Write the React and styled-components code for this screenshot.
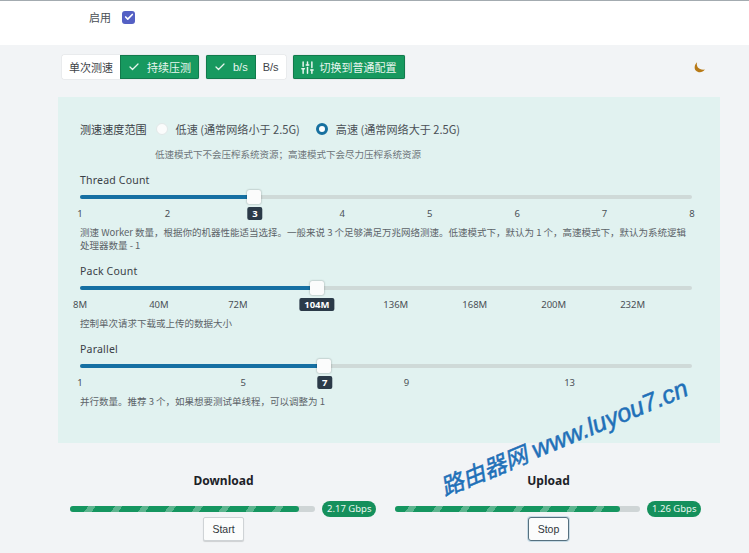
import React from "react";
import styled, { createGlobalStyle } from "styled-components";
import { Check, SlidersVertical } from "lucide-react";

const GlobalStyle = createGlobalStyle`
  html, body {
    margin: 0;
    padding: 0;
    background: #f2f4f6;
    overflow: hidden;
  }
  body {
    font-family: "Noto Sans CJK SC", "Noto Sans", sans-serif;
    color: #3a4046;
  }
`;

const sliders = [
  {
    label: "Thread Count",
    value: 28.5,
    marks: ["1", "2", "3", "4", "5", "6", "7", "8"].map((t, i) => ({
      text: t,
      left: (i / 7) * 100,
      active: t === "3",
    })),
    desc: "测速 Worker 数量，根据你的机器性能适当选择。一般来说 3 个足够满足万兆网络测速。低速模式下，默认为 1 个，高速模式下，默认为系统逻辑处理器数量 - 1",
  },
  {
    label: "Pack Count",
    value: 38.7,
    marks: ["8M", "40M", "72M", "104M", "136M", "168M", "200M", "232M"].map((t, i) => ({
      text: t,
      left: i * 12.9,
      active: t === "104M",
    })),
    desc: "控制单次请求下载或上传的数据大小",
  },
  {
    label: "Parallel",
    value: 39.9,
    marks: ["1", "5", "7", "9", "13"].map((t) => ({
      text: t,
      left: ((Number(t) - 1) / 15) * 100,
      active: t === "7",
    })),
    desc: "并行数量。推荐 3 个，如果想要测试单线程，可以调整为 1",
  },
];

const App = () => {
  return (
    <Page>
      <GlobalStyle />
      <Header>
        <HeaderLabel>启用</HeaderLabel>
        <CheckBox>
          <Check size={10} strokeWidth={4} color="#fff" />
        </CheckBox>
      </Header>

      <Toolbar>
        <ButtonGroup>
          <Segment>单次测速</Segment>
          <Segment $active>
            <Check size={12} strokeWidth={2.5} />
            持续压测
          </Segment>
        </ButtonGroup>
        <ButtonGroup>
          <Segment $active>
            <Check size={12} strokeWidth={2.5} />
            b/s
          </Segment>
          <Segment>B/s</Segment>
        </ButtonGroup>
        <ButtonGroup>
          <Segment $active $tight>
            <SlidersVertical size={15} strokeWidth={2.4} />
            切换到普通配置
          </Segment>
        </ButtonGroup>
        <MoonIcon viewBox="0 0 16 16">
          <path d="M5 1.5 C3.6 6.5 7 11.5 14.5 10.6 C12 14.6 6.4 15 3.4 11.8 C1.2 9.2 1.8 4.2 5 1.5 Z" fill="#b87a17" />
        </MoonIcon>
      </Toolbar>

      <Panel>
        <RadioRow>
          <RadioTitle>测速速度范围</RadioTitle>
          <RadioOption>
            <Radio />
            低速 (通常网络小于 2.5G)
          </RadioOption>
          <RadioOption>
            <Radio $checked />
            高速 (通常网络大于 2.5G)
          </RadioOption>
        </RadioRow>
        <RadioHint>低速模式下不会压榨系统资源；高速模式下会尽力压榨系统资源</RadioHint>

        {sliders.map((slider) => (
          <SliderBlock key={slider.label}>
            <SliderLabel>{slider.label}</SliderLabel>
            <Track>
              <Fill style={{ width: `${slider.value}%` }} />
              <Thumb style={{ left: `${slider.value}%` }} />
            </Track>
            <Marks>
              {slider.marks.map((mark) => (
                <Mark key={mark.text} $active={mark.active} style={{ left: `${mark.left}%` }}>
                  {mark.text}
                </Mark>
              ))}
            </Marks>
            <Description>{slider.desc}</Description>
          </SliderBlock>
        ))}
      </Panel>

      <Meters>
        <Meter>
          <MeterTitle>Download</MeterTitle>
          <BarRow>
            <Bar>
              <BarFill style={{ width: "93.5%" }} />
            </Bar>
            <Badge>2.17 Gbps</Badge>
          </BarRow>
          <ActionButton>Start</ActionButton>
        </Meter>
        <Meter>
          <MeterTitle>Upload</MeterTitle>
          <BarRow>
            <Bar>
              <BarFill style={{ width: "92%" }} />
            </Bar>
            <Badge>1.26 Gbps</Badge>
          </BarRow>
          <ActionButton $focused>Stop</ActionButton>
        </Meter>
      </Meters>

      <Watermark>
        路由器网 <WatermarkUrl>www.luyou7.cn</WatermarkUrl>
      </Watermark>
    </Page>
  );
};

export default App;

const Page = styled.div`
  position: relative;
  width: 749px;
  height: 553px;
  overflow: hidden;
  background: #f2f4f6;
`;

const Header = styled.div`
  display: flex;
  align-items: center;
  gap: 11px;
  height: 45px;
  box-sizing: border-box;
  padding: 0 0 12px 89px;
  background: #fff;
  border-top: 1px solid #a3abb0;
`;

const HeaderLabel = styled.span`
  font-size: 11px;
  color: #4a4f55;
`;

const CheckBox = styled.span`
  display: flex;
  align-items: center;
  justify-content: center;
  width: 13px;
  height: 13px;
  border-radius: 3px;
  background: #5460c4;
`;

const Toolbar = styled.div`
  display: flex;
  align-items: center;
  gap: 7px;
  height: 24px;
  margin-top: 10px;
  padding-left: 62px;
`;

const ButtonGroup = styled.div`
  display: flex;
  height: 24px;
  border-radius: 2px;
  overflow: hidden;
  box-shadow: 0 0 1px rgba(0, 0, 0, 0.35);
`;

const Segment = styled.div`
  display: flex;
  align-items: center;
  gap: ${(props) => (props.$tight ? "5px" : "7px")};
  padding: ${(props) => (props.$tight ? "0 7px 0 6px" : "0 7px")};
  font-family: "Liberation Sans", "Noto Sans CJK SC", sans-serif;
  font-size: 11px;
  white-space: nowrap;
  background: ${(props) => (props.$active ? "#17995f" : "#fff")};
  color: ${(props) => (props.$active ? "#e8f6ef" : "#3d4248")};
  border: ${(props) => (props.$active ? "1px solid #127a4c" : "none")};
  box-sizing: border-box;
`;

const MoonIcon = styled.svg`
  width: 13px;
  height: 13px;
  margin-left: 281px;
`;

const Panel = styled.div`
  margin: 18px 29px 0 58px;
  height: 346px;
  box-sizing: border-box;
  padding: 23px 28px 0 22px;
  background: #e1f2f0;
`;

const RadioRow = styled.div`
  display: flex;
  align-items: center;
  height: 18px;
  font-size: 11.1px;
`;

const RadioTitle = styled.span`
  color: #3a4046;
  margin-right: 9px;
`;

const RadioOption = styled.label`
  display: flex;
  align-items: center;
  gap: 8px;
  margin-right: 16px;
  color: #4a5056;
`;

const Radio = styled.span`
  width: 12px;
  height: 12px;
  box-sizing: border-box;
  border-radius: 50%;
  background: ${(props) => (props.$checked ? "#fff" : "#fbfcfc")};
  border: ${(props) => (props.$checked ? "3.5px solid #17709f" : "1px solid #e2e8e8")};
`;

const RadioHint = styled.div`
  margin: 9px 0 0 75px;
  font-size: 9.5px;
  line-height: 14px;
  color: #6d7479;
`;

const SliderBlock = styled.div`
  margin-top: 12px;
`;

const SliderLabel = styled.div`
  font-family: "Noto Sans", sans-serif;
  font-size: 10.5px;
  line-height: 14px;
  color: #3a4046;
  letter-spacing: 0.2px;
`;

const Track = styled.div`
  position: relative;
  height: 4px;
  margin-top: 8px;
  border-radius: 2px;
  background: #cfdad8;
`;

const Fill = styled.div`
  height: 100%;
  border-radius: 2px;
  background: #1570a3;
`;

const Thumb = styled.div`
  position: absolute;
  top: -5px;
  width: 14px;
  height: 14px;
  margin-left: -7px;
  border-radius: 2px;
  background: #fbfcfc;
  box-shadow: 0 0 2px rgba(0, 0, 0, 0.4);
`;

const Marks = styled.div`
  position: relative;
  height: 15px;
  margin-top: 8px;
`;

const Mark = styled.span`
  position: absolute;
  top: 0;
  transform: translateX(-50%);
  font-family: "Noto Sans", sans-serif;
  font-size: 9.5px;
  line-height: 13px;
  padding: 0 ${(props) => (props.$active ? "5px" : "0")};
  border-radius: 2px;
  font-weight: ${(props) => (props.$active ? 700 : 400)};
  background: ${(props) => (props.$active ? "#2b3a48" : "transparent")};
  color: ${(props) => (props.$active ? "#fff" : "#4a5056")};
`;

const Description = styled.div`
  margin-top: 4px;
  font-size: 9.5px;
  line-height: 13px;
  color: #5c6368;
`;

const Meters = styled.div`
  display: grid;
  grid-template-columns: 325px 325px;
  margin: 29px 0 0 70px;
`;

const Meter = styled.div`
  display: flex;
  flex-direction: column;
  align-items: center;
  width: 307px;
`;

const MeterTitle = styled.div`
  text-align: center;
  font-family: "Noto Sans", sans-serif;
  font-size: 12px;
  font-weight: 700;
  line-height: 18px;
  color: #1c2228;
`;

const BarRow = styled.div`
  display: flex;
  align-items: center;
  gap: 7px;
  width: 100%;
  margin-top: 11px;
`;

const Bar = styled.div`
  flex: none;
  width: 245px;
  height: 6px;
  border-radius: 3px;
  background: #cfd5d6;
`;

const BarFill = styled.div`
  height: 100%;
  border-radius: 3px;
  background: repeating-linear-gradient(
    -55deg,
    #159660 0 16px,
    #5db58f 16px 22px
  );
`;

const Badge = styled.span`
  flex: none;
  padding: 0 5px;
  font-family: "Noto Sans", sans-serif;
  font-size: 9.5px;
  line-height: 16px;
  border-radius: 8px;
  background: #15905c;
  color: #e8f6ef;
`;

const ActionButton = styled.button`
  width: 41px;
  height: 24px;
  padding: 0;
  font-family: "Liberation Sans", sans-serif;
  font-size: 10.5px;
  color: #30363b;
  background: #fbfcfc;
  border: 1px solid ${(props) => (props.$focused ? "#56707f" : "#cfd3d6")};
  border-radius: ${(props) => (props.$focused ? "3px" : "2px")};
  box-shadow: ${(props) => (props.$focused ? "0 0 0 1px #c7dbe6" : "0 1px 1px rgba(0,0,0,0.15)")};
`;

const Watermark = styled.div`
  position: absolute;
  left: 441px;
  top: 470px;
  transform: rotate(-22.5deg);
  transform-origin: left center;
  font-family: "Liberation Sans", "Noto Sans CJK SC", sans-serif;
  font-size: 23px;
  font-style: italic;
  white-space: nowrap;
  color: #1f70b8;
  -webkit-text-stroke: 0.5px #1f70b8;
`;

const WatermarkUrl = styled.span`
  font-size: 25px;
`;
